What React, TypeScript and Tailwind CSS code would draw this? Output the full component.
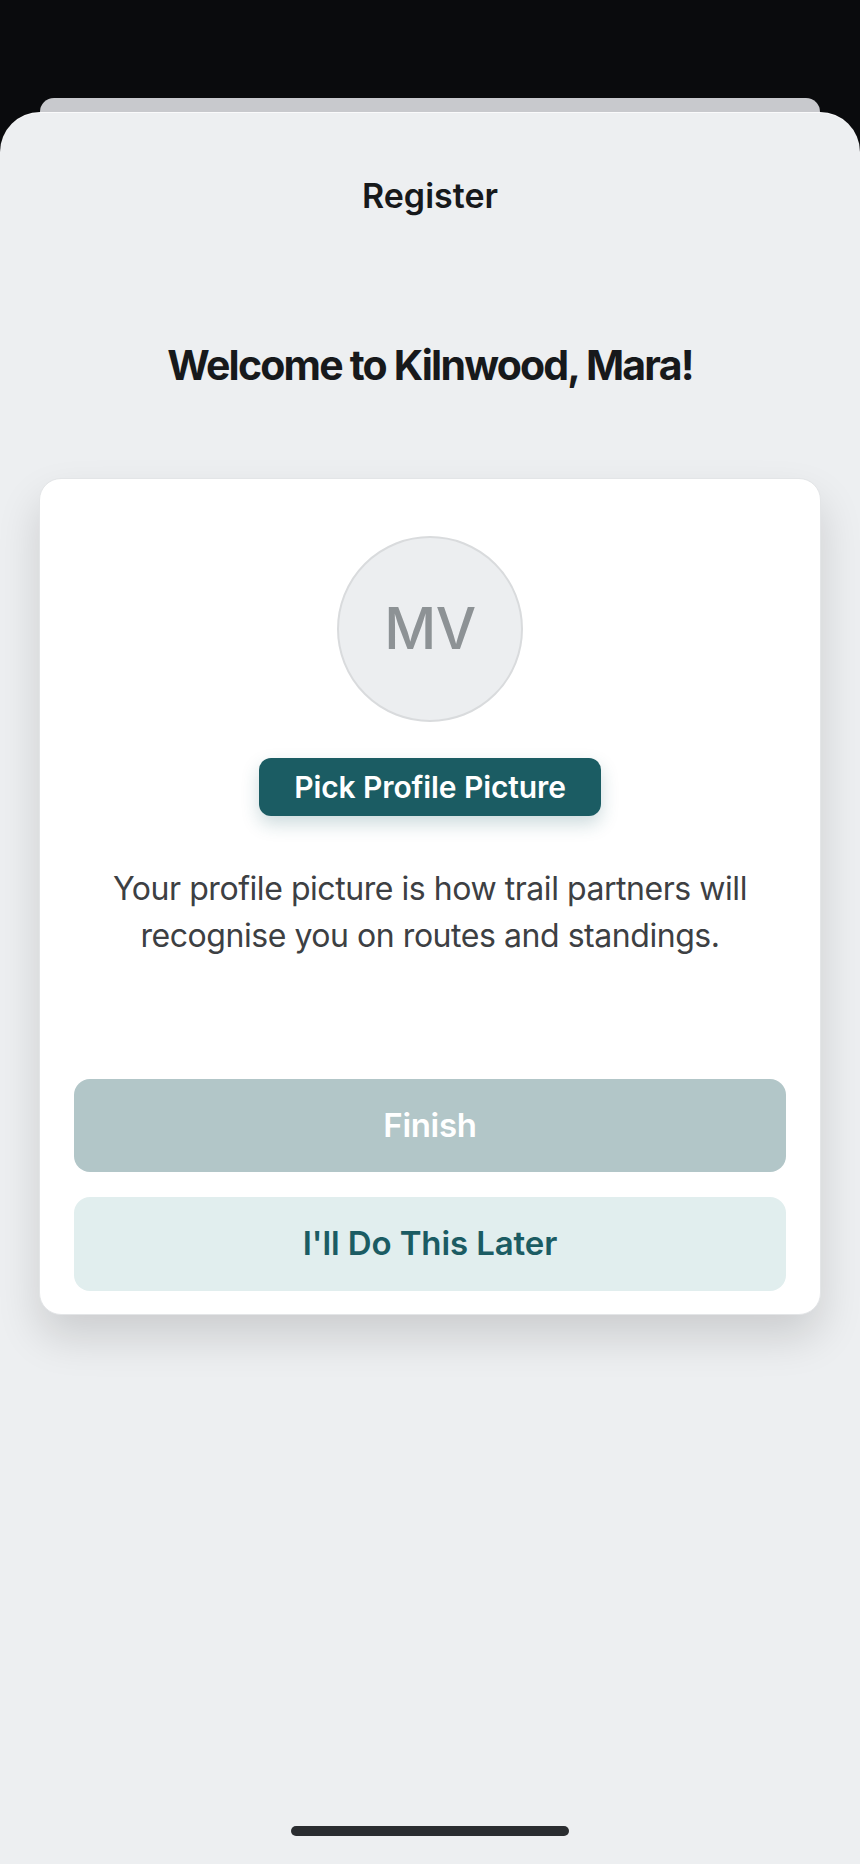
import React from 'react';

const font = { fontFamily: 'Inter, "Noto Sans", sans-serif' };

export default function App() {
  return (
    <div
      className="w-[860px] h-[1864px] bg-[#0a0b0d] flex flex-col pt-[98px] overflow-hidden"
      style={font}
    >
      {/* sheet stacked behind */}
      <div className="mx-[40px] h-[14px] shrink-0 rounded-t-[34px] bg-[#c8c9cd]" />

      {/* front sheet */}
      <div className="flex-1 flex flex-col items-center rounded-t-[40px] bg-[#edeff1] border-t border-white/70">
        <h1 className="mt-[63px] text-[34px] leading-[40px] font-semibold text-[#17191b] tracking-[0px]">
          Register
        </h1>

        <h2 className="mt-[123px] text-[41px] leading-[52px] font-bold text-[#17191b] tracking-[-1.8px]">
          Welcome to Kilnwood, Mara!
        </h2>

        <div className="mt-[87px] w-[782px] rounded-[22px] bg-white border border-[#e3e5e7] shadow-[0_22px_44px_rgba(0,0,0,0.14)] px-[34px] pt-[57px] pb-[23px] flex flex-col items-center">
          <div className="w-[186px] h-[186px] rounded-full bg-[#eceef0] border-2 border-[#d9dbdd] flex items-center justify-center">
            <span className="text-[57px] font-medium text-[#8d9295] tracking-[-0.5px]">MV</span>
          </div>

          <button className="mt-[36px] h-[58px] w-[342px] rounded-[12px] bg-[#1b5c63] text-white text-[30px] font-semibold tracking-[-0.1px] shadow-[0_8px_18px_rgba(27,92,99,0.22)]">
            Pick Profile Picture
          </button>

          <p className="mt-[49px] text-center text-[32px] leading-[47px] text-[#3d4043] tracking-[-0.45px]">
            Your profile picture is how trail partners will
            <br />
            recognise you on routes and standings.
          </p>

          <button className="mt-[120px] w-full h-[93px] rounded-[16px] bg-[#b2c6c8] text-white text-[33px] font-semibold tracking-[-0.3px]">
            Finish
          </button>

          <button className="mt-[25px] w-full h-[94px] rounded-[16px] bg-[#e1eeee] text-[#1b5c63] text-[33px] font-semibold tracking-[-0.1px]">
            I'll Do This Later
          </button>
        </div>

        <div className="mt-auto mb-[28px] w-[278px] h-[10px] rounded-full bg-[#2a2d30]" />
      </div>
    </div>
  );
}
